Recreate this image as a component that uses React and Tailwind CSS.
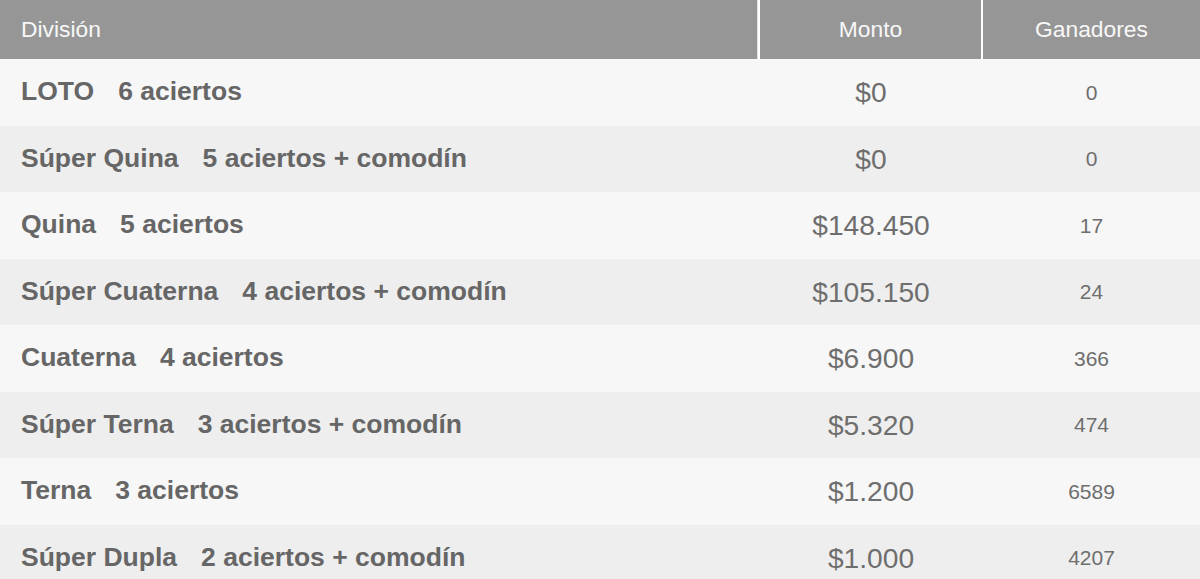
const rows = [
  { name: 'LOTO', hits: '6 aciertos', monto: '$0', ganadores: '0' },
  { name: 'Súper Quina', hits: '5 aciertos + comodín', monto: '$0', ganadores: '0' },
  { name: 'Quina', hits: '5 aciertos', monto: '$148.450', ganadores: '17' },
  { name: 'Súper Cuaterna', hits: '4 aciertos + comodín', monto: '$105.150', ganadores: '24' },
  { name: 'Cuaterna', hits: '4 aciertos', monto: '$6.900', ganadores: '366' },
  { name: 'Súper Terna', hits: '3 aciertos + comodín', monto: '$5.320', ganadores: '474' },
  { name: 'Terna', hits: '3 aciertos', monto: '$1.200', ganadores: '6589' },
  { name: 'Súper Dupla', hits: '2 aciertos + comodín', monto: '$1.000', ganadores: '4207' },
];

const App = () => {
  return (
    <div className="w-[1200px] h-[579px] overflow-hidden bg-white font-['Liberation_Sans',Arial,sans-serif]">
      <div className="grid grid-cols-[757px_1px_223px_1fr] h-[59px] bg-[#969696] text-[22.8px] text-[#f8f8f8]">
        <div className="flex items-center pl-[21px] pb-[1px]">División</div>
        <div className="bg-[#e2e2e2]" />
        <div className="flex items-center justify-center border-l-2 border-white pb-[1px]">Monto</div>
        <div className="flex items-center justify-center border-l-2 border-white pb-[1px]">Ganadores</div>
      </div>
      {rows.map((row, i) => (
        <div
          key={row.name}
          className={`grid grid-cols-[759px_224px_1fr] h-[66.5px] text-[#666666] ${
            i % 2 === 0 ? 'bg-[#f7f7f7]' : 'bg-[#eeeeee]'
          }`}
        >
          <div className="flex items-center pl-[21px] text-[26.5px] font-bold">
            <span>{row.name}</span>
            <span className="ml-[24px]">{row.hits}</span>
          </div>
          <div className="flex items-center justify-center text-[28.2px] text-[#6e6e6e]">{row.monto}</div>
          <div className="flex items-center justify-center text-[21px] text-[#6e6e6e]">{row.ganadores}</div>
        </div>
      ))}
    </div>
  );
};

export default App;
